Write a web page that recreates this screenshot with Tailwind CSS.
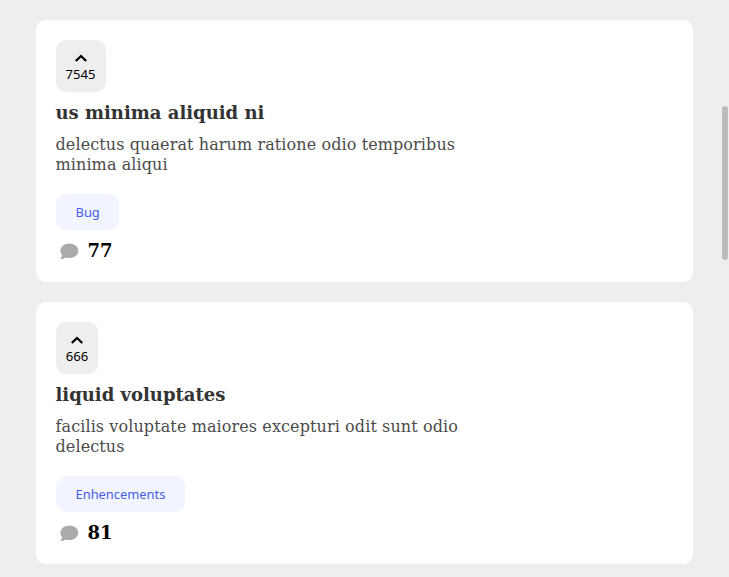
<!DOCTYPE html>
<html lang="en">
<head>
<meta charset="utf-8">
<title>Feedback</title>
<script src="https://cdn.jsdelivr.net/npm/@tailwindcss/browser@4"></script>
</head>
<body class="relative h-[577px] overflow-hidden bg-[#eee] font-['DejaVu_Serif',serif] text-black">
<main class="flex flex-col gap-5 pt-5 pl-9 pr-9">
  <article class="flex h-[262px] flex-col items-start rounded-[10px] bg-white p-5">
    <button class="flex h-[52px] w-[50px] flex-col items-center rounded-[10px] bg-[#eee] pt-[14px] pr-px font-['Noto_Sans',sans-serif] text-[13.1px] leading-[15px]">
      <svg class="h-[9px] w-3 shrink-0" viewBox="0 0 12 9" fill="none" stroke="currentColor" stroke-width="2.3"><path d="M.8 7 6 2l5.2 5"/></svg>
      <span class="mt-[4px]">7545</span>
    </button>
    <h2 class="-ml-[0.5px] mt-[10px] text-[18px] leading-[21px] font-bold text-[#333]">us minima aliquid ni</h2>
    <p class="-ml-[0.5px] mt-3 w-[410px] text-[16px] leading-5 tracking-[0.1px] text-[#4b4b4b]">delectus quaerat harum ratione odio temporibus minima aliqui</p>
    <span class="mt-[19px] flex h-9 w-[63px] items-center rounded-[10px] bg-[#f2f4ff] pt-0.5 pl-[19.5px] font-['Noto_Sans',sans-serif] text-[12.9px] text-[#4661e6]">Bug</span>
    <div class="mt-[10px] flex h-[22px] items-center pl-1">
      <svg class="h-[18px] w-[19px]" viewBox="0 0 19 18"><path fill="#aaa" d="M9.3 1.5C4.3 1.5.4 4.7.4 8.7c0 1.7.7 3.2 1.8 4.4-.2 1.4-.7 2.4-1.6 3.2-.3.4-.1.7.4.7 1.7 0 3.2-.7 4.3-1.6 1.2.4 2.5.6 4 .6 5 0 9-3.2 9-7.3s-4-7.2-9-7.2Z"/></svg>
      <span class="ml-[8.5px] text-[18px] leading-[22px] font-bold">77</span>
    </div>
  </article>
  <article class="flex h-[262px] flex-col items-start rounded-[10px] bg-white p-5">
    <button class="flex h-[52px] w-[42px] flex-col items-center rounded-[10px] bg-[#eee] pt-[14px] font-['Noto_Sans',sans-serif] text-[13.1px] leading-[15px]">
      <svg class="h-[9px] w-3 shrink-0" viewBox="0 0 12 9" fill="none" stroke="currentColor" stroke-width="2.3"><path d="M.8 7 6 2l5.2 5"/></svg>
      <span class="mt-[4px]">666</span>
    </button>
    <h2 class="-ml-[0.5px] mt-[10px] text-[18px] leading-[21px] font-bold text-[#333]">liquid voluptates</h2>
    <p class="-ml-[0.5px] mt-3 w-[410px] text-[16px] leading-5 tracking-[0.1px] text-[#4b4b4b]">facilis voluptate maiores excepturi odit sunt odio delectus</p>
    <span class="mt-[19px] flex h-9 w-[129px] items-center rounded-[10px] bg-[#f2f4ff] pt-0.5 pl-[19.5px] font-['Noto_Sans',sans-serif] text-[12.9px] text-[#4661e6]">Enhencements</span>
    <div class="mt-[10px] flex h-[22px] items-center pl-1">
      <svg class="h-[18px] w-[19px]" viewBox="0 0 19 18"><path fill="#aaa" d="M9.3 1.5C4.3 1.5.4 4.7.4 8.7c0 1.7.7 3.2 1.8 4.4-.2 1.4-.7 2.4-1.6 3.2-.3.4-.1.7.4.7 1.7 0 3.2-.7 4.3-1.6 1.2.4 2.5.6 4 .6 5 0 9-3.2 9-7.3s-4-7.2-9-7.2Z"/></svg>
      <span class="ml-[8.5px] text-[18px] leading-[22px] font-bold">81</span>
    </div>
  </article>
</main>
<div class="absolute top-[106px] left-[722px] h-[154px] w-1.5 rounded-full bg-[#bcbcbc]"></div>
</body>
</html>
